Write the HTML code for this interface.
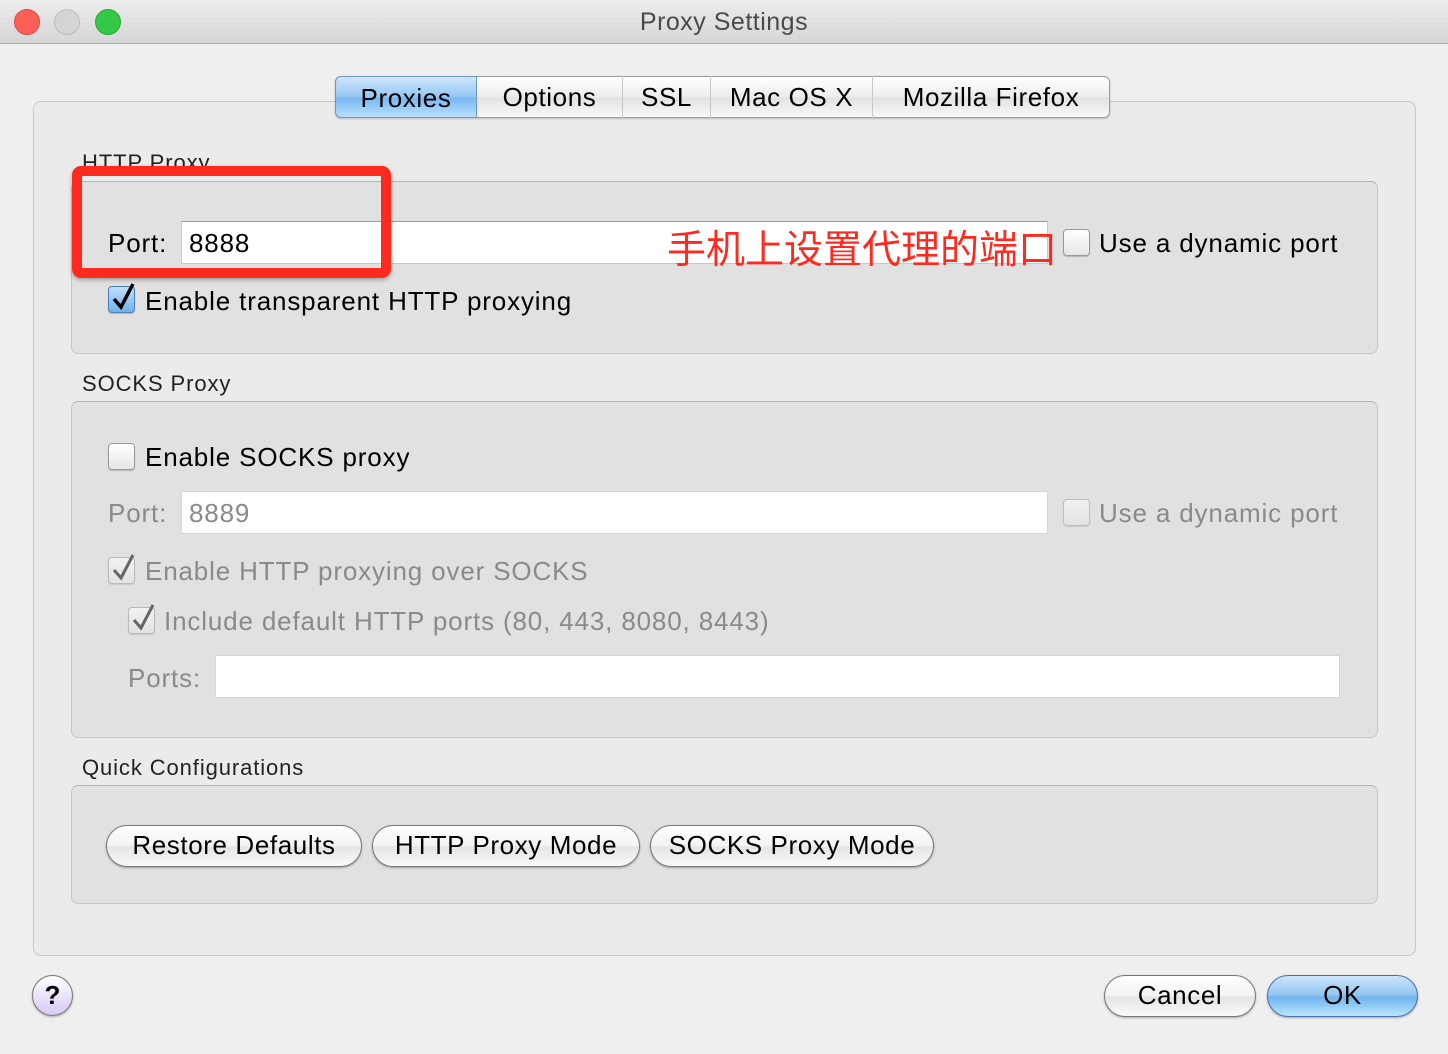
<!DOCTYPE html>
<html><head><meta charset="utf-8"><style>
*{margin:0;padding:0;box-sizing:border-box}
body{width:1448px;height:1054px;background:#efefef;font-family:"Liberation Sans","Noto Sans CJK SC",sans-serif;position:relative;overflow:hidden;color:#000}
.a{position:absolute;white-space:nowrap}
.t{font-size:26px;letter-spacing:0.85px;line-height:30px}
.g{color:#8a8a8a}
.s{font-size:22px;line-height:24px;color:#222;letter-spacing:0.9px}
.box{position:absolute;background:#e1e1e1;border:1px solid #c6c6c6;border-top-color:#b4b4b4;border-radius:7px}
.inp{position:absolute;background:#fff;border:1px solid #c8c8c8;border-top-color:#9a9a9a}
.cb{position:absolute;width:27px;height:27px;border:1px solid #9a9a9a;border-radius:4px;background:linear-gradient(#fff,#e6e6e6);box-shadow:0 1px 1px rgba(0,0,0,.2)}
.cb svg{position:absolute;left:2px;top:-6px}
.btn{position:absolute;height:42px;border:1.5px solid #777;border-radius:21px;background:linear-gradient(#fff 0%,#f3f3f3 50%,#e4e4e4 52%,#fafafa 100%);font-size:26px;letter-spacing:0.6px;text-align:center;line-height:39px;box-shadow:0 1px 2px rgba(0,0,0,.3)}
.tab{position:absolute;top:76px;height:42px;font-size:26px;letter-spacing:0.6px;text-align:center;line-height:42px;border-right:1px solid #c8c8c8}
</style></head><body>
<div class="a" style="left:0;top:0;width:1448px;height:44px;background:linear-gradient(#ececec,#d6d6d6);border-bottom:1px solid #acacac"></div>
<div class="a" style="left:14px;top:9px;width:26px;height:26px;border-radius:50%;background:#fc5f57;border:1px solid #de4a42"></div>
<div class="a" style="left:54px;top:9px;width:26px;height:26px;border-radius:50%;background:#d4d4d4;border:1px solid #bdbdbd"></div>
<div class="a" style="left:95px;top:9px;width:26px;height:26px;border-radius:50%;background:#34c748;border:1px solid #27aa36"></div>
<div class="a" style="left:0;width:1448px;top:8px;text-align:center;font-size:25px;color:#4a4a4a;letter-spacing:0.5px">Proxy Settings</div>

<div class="a" style="left:33px;top:101px;width:1383px;height:855px;background:#ebebeb;border:1px solid #c8c8c8;border-radius:8px"></div>

<div class="a" style="left:335px;top:76px;width:775px;height:42px;background:linear-gradient(#fff,#ececec 50%,#e2e2e2 52%,#f8f8f8);border:1px solid #9c9c9c;border-radius:6px;box-shadow:0 1px 2px rgba(0,0,0,.2)"></div>
<div class="tab" style="left:335px;width:142px;background:linear-gradient(#cfe6fb,#93c6f4 50%,#79b6f0 52%,#b7e0fd);border:1px solid #6a96c8;border-radius:6px 0 0 6px">Proxies</div>
<div class="tab" style="left:477px;width:146px">Options</div>
<div class="tab" style="left:623px;width:88px">SSL</div>
<div class="tab" style="left:711px;width:162px">Mac OS X</div>
<div class="tab" style="left:873px;width:236px;border:none">Mozilla Firefox</div>

<div class="a s" style="left:82px;top:151px">HTTP Proxy</div>
<div class="box" style="left:71px;top:181px;width:1307px;height:173px"></div>
<div class="a t" style="left:108px;top:228px">Port:</div>
<div class="inp" style="left:181px;top:221px;width:867px;height:43px"></div>
<div class="a t" style="left:189px;top:228px">8888</div>
<div class="a" style="left:667px;top:224px;font-size:39px;color:#ff2a1f;font-family:'Noto Sans CJK SC',sans-serif;line-height:46px">手机上设置代理的端口</div>
<div class="cb" style="left:1063px;top:229px"></div>
<div class="a t" style="left:1099px;top:228px">Use a dynamic port</div>
<div class="cb" style="left:108px;top:286px;background:linear-gradient(#bfe0fb,#6fb1ec);border-color:#4a7fb8"><svg width="26" height="30"><path d="M3 18 L10 26 L22 3" stroke="#000" stroke-width="3.5" fill="none"/></svg></div>
<div class="a t" style="left:145px;top:286px">Enable transparent HTTP proxying</div>
<div class="a" style="left:72px;top:166px;width:319px;height:112px;border:10px solid #ff2a1f;border-radius:9px;box-shadow:0 2px 4px rgba(0,0,0,.3)"></div>

<div class="a s" style="left:82px;top:372px">SOCKS Proxy</div>
<div class="box" style="left:71px;top:401px;width:1307px;height:337px"></div>
<div class="cb" style="left:108px;top:443px"></div>
<div class="a t" style="left:145px;top:442px">Enable SOCKS proxy</div>
<div class="a t g" style="left:108px;top:498px">Port:</div>
<div class="inp" style="left:181px;top:491px;width:867px;height:43px;border-color:#d6d6d6"></div>
<div class="a t g" style="left:189px;top:498px">8889</div>
<div class="cb" style="left:1063px;top:499px;opacity:.5"></div>
<div class="a t g" style="left:1099px;top:498px">Use a dynamic port</div>
<div class="cb" style="left:108px;top:557px;opacity:.55"><svg width="26" height="30"><path d="M3 18 L10 26 L22 3" stroke="#000" stroke-width="3" fill="none"/></svg></div>
<div class="a t g" style="left:145px;top:556px">Enable HTTP proxying over SOCKS</div>
<div class="cb" style="left:128px;top:607px;opacity:.55"><svg width="26" height="30"><path d="M3 18 L10 26 L22 3" stroke="#000" stroke-width="3" fill="none"/></svg></div>
<div class="a t g" style="left:164px;top:606px">Include default HTTP ports (80, 443, 8080, 8443)</div>
<div class="a t g" style="left:128px;top:663px">Ports:</div>
<div class="inp" style="left:215px;top:655px;width:1125px;height:43px;border-color:#d6d6d6"></div>

<div class="a s" style="left:82px;top:756px">Quick Configurations</div>
<div class="box" style="left:71px;top:785px;width:1307px;height:119px"></div>
<div class="btn" style="left:106px;top:825px;width:256px">Restore Defaults</div>
<div class="btn" style="left:372px;top:825px;width:268px">HTTP Proxy Mode</div>
<div class="btn" style="left:650px;top:825px;width:284px">SOCKS Proxy Mode</div>

<div class="a" style="left:32px;top:975px;width:41px;height:41px;border-radius:50%;border:1.5px solid #777;background:linear-gradient(#fff,#d8c8f4);text-align:center;font-size:26px;font-weight:bold;line-height:38px;box-shadow:0 1px 2px rgba(0,0,0,.3)">?</div>
<div class="btn" style="left:1104px;top:975px;width:152px">Cancel</div>
<div class="btn" style="left:1267px;top:975px;width:151px;border-color:#4a6fb0;background:linear-gradient(#cde6fb,#8ec4f2 50%,#6fb3ef 52%,#b9e7fd)">OK</div>
</body></html>
